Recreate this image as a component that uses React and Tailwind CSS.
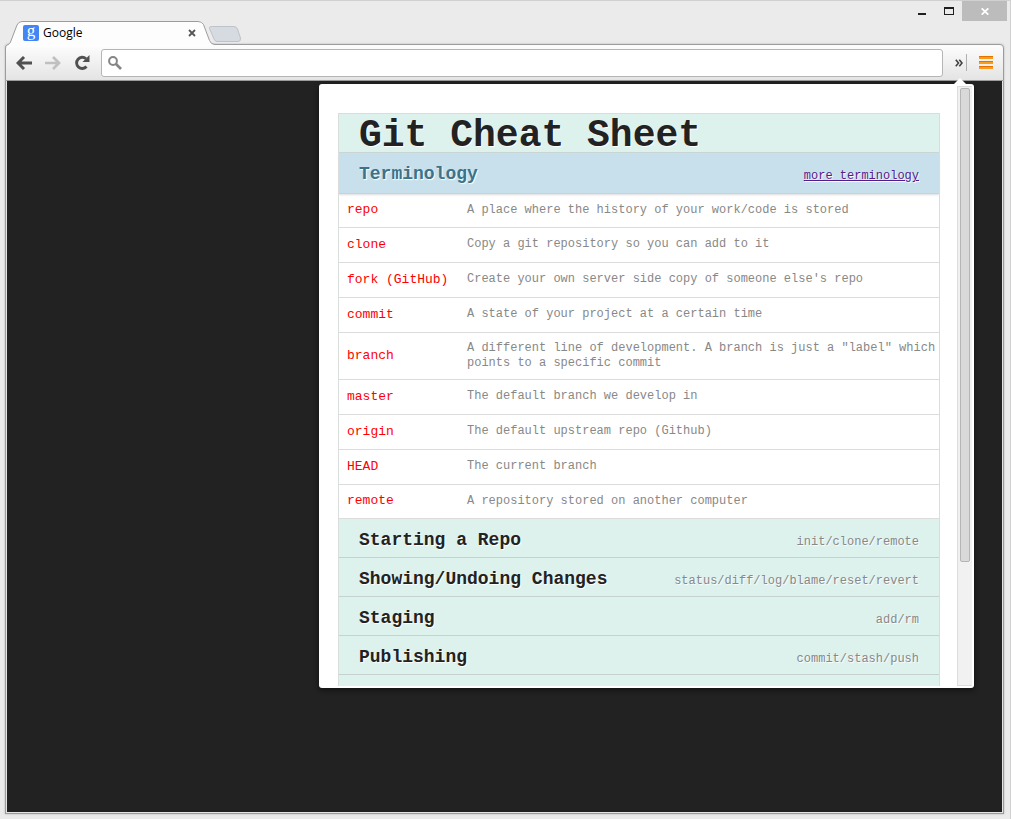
import React from "react";

const terms = [
  ["repo", "A place where the history of your work/code is stored"],
  ["clone", "Copy a git repository so you can add to it"],
  ["fork (GitHub)", "Create your own server side copy of someone else's repo"],
  ["commit", "A state of your project at a certain time"],
  ["branch", 'A different line of development. A branch is just a "label" which points to a specific commit'],
  ["master", "The default branch we develop in"],
  ["origin", "The default upstream repo (Github)"],
  ["HEAD", "The current branch"],
  ["remote", "A repository stored on another computer"],
];

const sections = [
  ["Starting a Repo", "init/clone/remote"],
  ["Showing/Undoing Changes", "status/diff/log/blame/reset/revert"],
  ["Staging", "add/rm"],
  ["Publishing", "commit/stash/push"],
];

function WindowControls() {
  return (
    <div className="flex h-5 justify-end pr-[3px]">
      <button aria-label="Minimize" className="flex w-[26px] items-center justify-center">
        <svg width="8" height="10" viewBox="0 0 8 10"><path d="M0 7h8v2H0z" fill="#1f1f1f" /></svg>
      </button>
      <button aria-label="Maximize" className="flex w-[27px] items-center justify-center">
        <svg width="10" height="8" viewBox="0 0 10 8"><path d="M0 0h10v8H0zM1 2v5h8V2z" fill="#1f1f1f" fillRule="evenodd" /></svg>
      </button>
      <button aria-label="Close window" className="flex w-[45px] items-center justify-center bg-[#bcbcbc]">
        <svg width="8" height="7" viewBox="0 0 8 7"><path d="M.7.3l6.6 6.4M7.3.3L.7 6.7" stroke="#fff" strokeWidth="1.7" /></svg>
      </button>
    </div>
  );
}

function TabStrip() {
  return (
    <div className="flex h-[23px] items-start pl-[5px]">
      <div className="relative z-10 flex h-[23px] w-[203px] items-center pl-[18px] pr-3">
        <svg className="absolute left-0 top-0" width="212" height="26" viewBox="0 0 212 26">
          <path d="M1 26C1 23.500 4.500 24 5.500 21L12 4Q13.500 -.5 17 -.5H193Q197 -.5 198.500 3L204.500 19Q206 23.500 210 23.500V24.500L208 26Z" fill="#fdfdfd" />
          <path d="M.5 26C1 23.500 4.500 24 5.500 21L12 4Q13.500 .5 17 .5H193Q197 .5 198.500 3.500L204.500 19.500Q206 23.500 210 23.500H212" fill="none" stroke="#9c9c9c" />
        </svg>
        <span className="relative flex size-4 items-center justify-center rounded-xs bg-[#4285f4] font-['Liberation_Serif',serif] text-[17px] leading-3 text-white">
          <span className="pb-1">g</span>
        </span>
        <span className="relative ml-1 flex-1 font-['Open_Sans',sans-serif] text-xs text-black">Google</span>
        <button aria-label="Close tab" className="relative">
          <svg width="8" height="8" viewBox="0 0 8 8"><path d="M1 1l6 6M7 1L1 7" stroke="#555" strokeWidth="1.8" /></svg>
        </button>
      </div>
      <button aria-label="New tab" className="mt-1">
        <svg width="34" height="18" viewBox="0 0 34 18">
          <path d="M3.500 1.500H26Q28.500 1.500 29.500 4L32.500 13Q33 16.500 30 16.500H9Q7 16.500 6 14L1.500 3.500Q1 1.500 3.500 1.500Z" fill="#d6dbe2" stroke="#bfc2c6" />
        </svg>
      </button>
    </div>
  );
}

function Toolbar() {
  return (
    <div className="flex h-[37px] items-center rounded-t-[4px] border border-[#9c9c9c] bg-linear-to-b from-[#fdfdfd] to-[#e4e4e4] pl-[10px]">
      <button aria-label="Back" className="mr-[13px]">
        <svg width="16" height="14" viewBox="0 0 16 14"><path d="M8 1L2 7l6 6M2 7h14" fill="none" stroke="#505050" strokeWidth="2.900" /></svg>
      </button>
      <button aria-label="Forward" className="mr-[13px]">
        <svg width="16" height="14" viewBox="0 0 16 14"><path d="M8 1l6 6-6 6M14 7H0" fill="none" stroke="#c0c0c0" strokeWidth="2.700" /></svg>
      </button>
      <button aria-label="Reload" className="mr-[11px]">
        <svg width="16" height="16" viewBox="0 0 16 16">
          <path d="M12.500 11.500A5.600 5.600 0 1 1 12 3.800" fill="none" stroke="#505050" strokeWidth="2.900" />
          <path d="M15.500 0v7H8.500z" fill="#505050" />
        </svg>
      </button>
      <label className="flex h-7 min-w-0 flex-1 items-center rounded-[3px] border border-[#b5b5b5] bg-white pl-[6px]">
        <svg className="shrink-0" width="14" height="14" viewBox="0 0 14 14">
          <circle cx="5" cy="5" r="3.900" fill="none" stroke="#858585" strokeWidth="2" />
          <path d="M8 8l5 5" stroke="#858585" strokeWidth="2.600" />
        </svg>
        <input aria-label="Address and search bar" className="h-full min-w-0 flex-1 px-2 text-sm outline-none" />
      </label>
      <button aria-label="More extensions" className="ml-3 mr-[3px]">
        <svg width="8" height="8" viewBox="0 0 8 8"><path d="M.8.8L3.500 4 .8 7.200M4.300.8L7 4 4.300 7.200" fill="none" stroke="#404040" strokeWidth="1.600" /></svg>
      </button>
      <span className="h-[17px] w-px bg-[#b0b0b0]" />
      <button aria-label="Menu" className="ml-3 mr-[10px]">
        <svg width="14" height="13" viewBox="0 0 14 13">
          <path d="M0 0h14v3H0zM0 5h14v3H0zM0 10h14v3H0z" fill="#fb9b1c" />
          <path d="M0 0h14v1H0zM0 5h14v1H0zM0 10h14v1H0z" fill="#e47200" />
        </svg>
      </button>
    </div>
  );
}

function CheatSheet() {
  return (
    <main className="min-w-0 flex-1 pl-[19px] pr-[17px] pt-[27px] text-[#222]">
      <div className="border border-b-0 border-[#d9dddc]">
        <h1 className="h-[39px] border-b border-[#c9d6d4] bg-[#ddf1ed] pl-5 text-[38px] font-bold leading-[44px] [text-shadow:1px_1px_1px_#fff]">
          Git Cheat Sheet
        </h1>
        <div className="flex h-[41px] items-baseline justify-between border-b border-[#cbd0d2] bg-[#c8e0eb] px-5 pt-[7px] shadow-[0_1px_2px_#ddd]">
          <h2 className="text-lg font-bold text-[#3d7288] [text-shadow:1px_1px_1px_#fff]">Terminology</h2>
          <a href="#terminology" className="text-xs text-[#551a8b] underline [text-shadow:1px_1px_1px_#fff]">more terminology</a>
        </div>
        <table className="w-full border-collapse text-left">
          <tbody>
            {terms.map(([term, meaning]) => (
              <tr key={term} className="h-[35px] border-b border-[#dcdcdc] first:h-[33px] last:h-[34px]">
                <th scope="row" className="w-[128px] pl-2 text-[13px] font-normal leading-4 text-[#f00]">{term}</th>
                <td className="py-2 text-xs leading-[15px] text-[#888]">{meaning}</td>
              </tr>
            ))}
          </tbody>
        </table>
        {sections.map(([title, commands]) => (
          <div key={title} className="flex h-[39px] items-baseline justify-between border-b border-[#c5d3d0] bg-[#ddf1ed] px-5 pt-[7px]">
            <h2 className="text-lg font-bold [text-shadow:1px_1px_1px_#fff]">{title}</h2>
            <span className="text-xs text-[#888] [text-shadow:1px_1px_1px_#fff]">{commands}</span>
          </div>
        ))}
        <div className="h-[39px] bg-[#ddf1ed]" />
      </div>
    </main>
  );
}

function Popup() {
  return (
    <div className="absolute right-[29px] top-[3px] w-[655px] rounded-[3px] bg-white py-[2px] font-['Liberation_Mono',monospace] shadow-[0_2px_5px_#111]">
      <svg className="absolute -top-[6px] right-2" width="12" height="7" viewBox="0 0 12 7"><path d="M6 0l6 6v1H0V6z" fill="#fff" /></svg>
      <div className="flex h-[600px] overflow-hidden pr-[2px]">
        <CheatSheet />
        <div className="w-[15px] border border-[#dcdcdc] border-r-[#f1f1f1] bg-[#f1f1f1] px-[2px] pt-px">
          <div className="h-[474px] w-[10px] rounded-[2px] border border-[#b5b5b5] bg-[#d9d9d9]" />
        </div>
      </div>
    </div>
  );
}

export default function App() {
  return (
    <div className="flex min-h-screen flex-col border-r border-t border-[#d0d0d0] bg-[#ebebeb]">
      <WindowControls />
      <div className="flex flex-1 flex-col pb-[5px] pr-[6px]">
        <TabStrip />
        <div className="ml-[5px] flex flex-1 flex-col rounded-t-[4px] shadow-[0_0_2px_#aaa]">
          <Toolbar />
          <div className="relative flex-1 border border-t-0 border-[#9c9c9c] bg-[#222] shadow-[inset_1px_0_0_#e4e4e4,inset_-1px_-1px_0_#e4e4e4]">
            <Popup />
          </div>
        </div>
      </div>
    </div>
  );
}
